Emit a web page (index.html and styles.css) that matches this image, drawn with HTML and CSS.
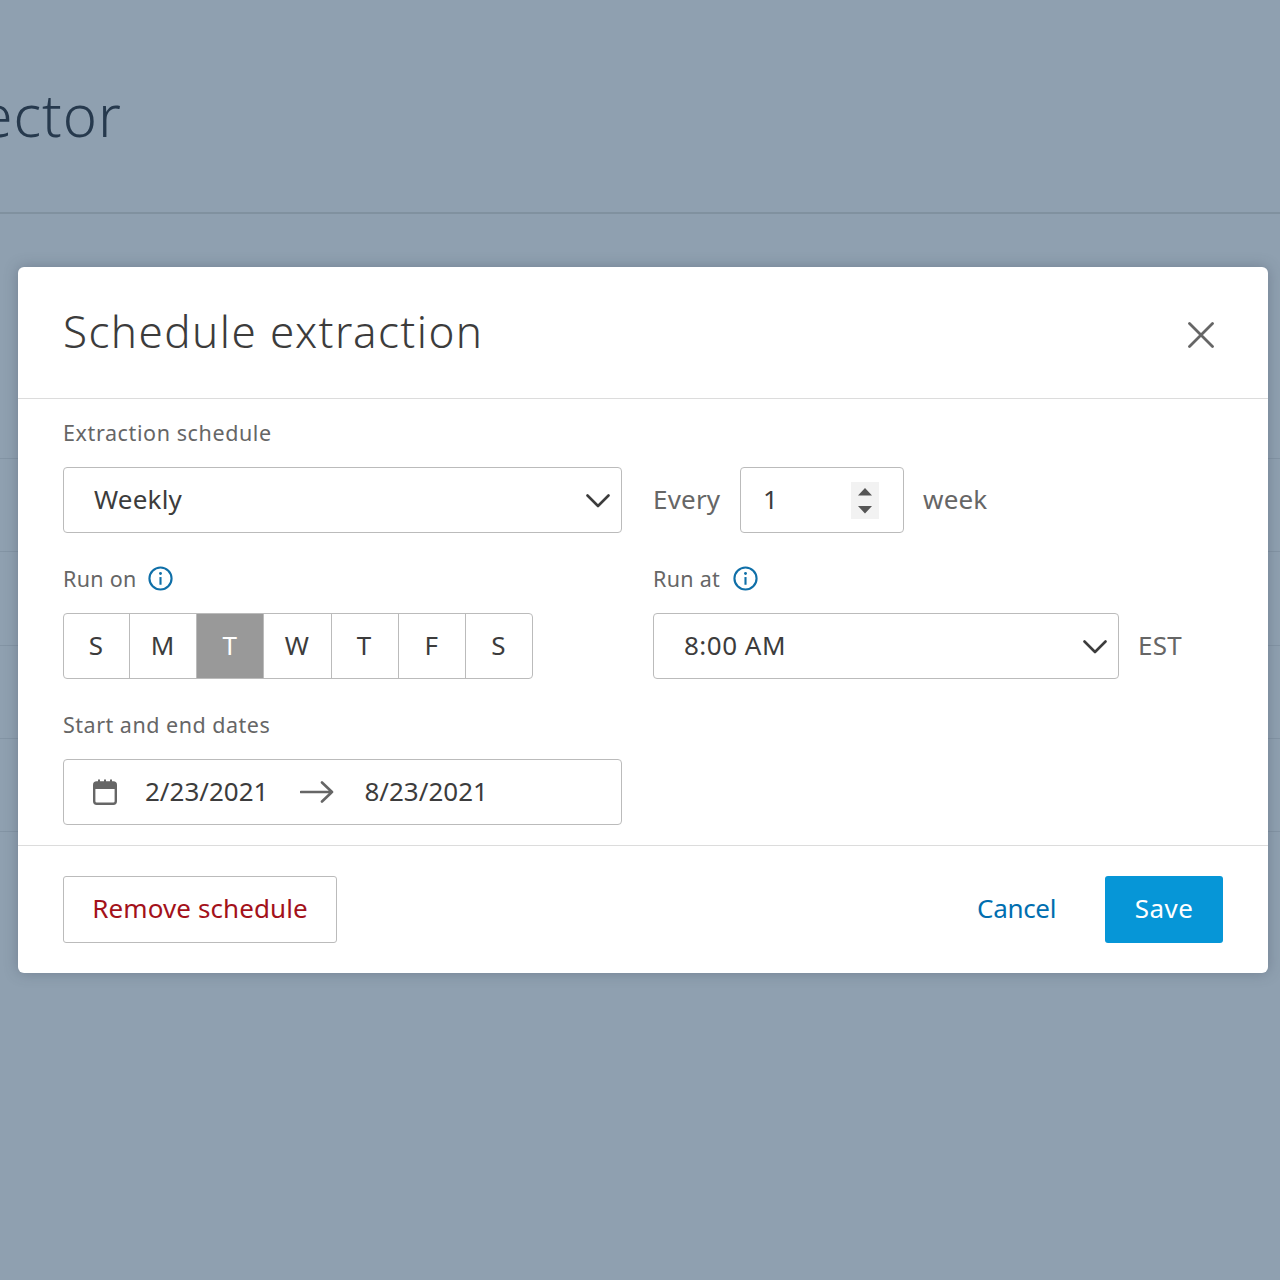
FILE: index.html
```html
<!DOCTYPE html>
<html>
  <head>
    <meta charset="utf-8">
    <title>Schedule extraction</title>
    <link rel="stylesheet" href="styles.css">
  </head>
  <body>
    <div class="page">
      <div class="page-head"><h1 class="page-title">Connector</h1></div>
      <div class="list">
        <div class="list-row"></div>
        <div class="list-row"></div>
        <div class="list-row"></div>
        <div class="list-row"></div>
        <div class="list-row"></div>
      </div>
    </div>

    <div class="modal">
      <div class="modal-head">
        <h2 class="modal-title">Schedule extraction</h2>
        <svg class="close" width="26" height="26" viewBox="0 0 26 26"><path d="M1.500 1.500l23 23M24.500 1.500l-23 23" fill="none" stroke="#666" stroke-width="2.800" stroke-linecap="round"/></svg>
      </div>

      <div class="modal-body">
        <div class="label label-wide">Extraction schedule</div>
        <div class="line">
          <div class="field select select-wide">
            <span class="value-weekly">Weekly</span>
            <svg class="chevron" width="24" height="14" viewBox="0 0 24 14"><path d="M1.500 1.500L12 12 22.500 1.500" fill="none" stroke="#3c3c3c" stroke-width="2.600" stroke-linecap="round" stroke-linejoin="round"/></svg>
          </div>
          <span class="side every">Every</span>
          <div class="field number">
            <span>1</span>
            <div class="stepper">
              <svg width="16" height="30" viewBox="0 0 16 30"><path d="M8 3l7 7.500H1zM1 21h14l-7 7.500z" fill="#555"/></svg>
            </div>
          </div>
          <span class="side week">week</span>
        </div>

        <div class="columns">
          <div class="col-left">
            <div class="label label-short">Run on
              <svg class="info" width="25" height="25" viewBox="0 0 26 26"><circle cx="13" cy="13" r="11.500" fill="none" stroke="#0f6fa8" stroke-width="2.200"/><circle cx="13" cy="7.800" r="1.500" fill="#0f6fa8"/><path d="M13 11.500v8" stroke="#0f6fa8" stroke-width="2.200"/></svg>
            </div>
            <div class="days">
              <div class="day day-first">S</div>
              <div class="day">M</div>
              <div class="day on">T</div>
              <div class="day">W</div>
              <div class="day">T</div>
              <div class="day">F</div>
              <div class="day">S</div>
            </div>
          </div>
          <div class="col-right">
            <div class="label label-short">Run at
              <svg class="info" width="25" height="25" viewBox="0 0 26 26"><circle cx="13" cy="13" r="11.500" fill="none" stroke="#0f6fa8" stroke-width="2.200"/><circle cx="13" cy="7.800" r="1.500" fill="#0f6fa8"/><path d="M13 11.500v8" stroke="#0f6fa8" stroke-width="2.200"/></svg>
            </div>
            <div class="line">
              <div class="field select select-time">
                <span>8:00 AM</span>
                <svg class="chevron" width="24" height="14" viewBox="0 0 24 14"><path d="M1.500 1.500L12 12 22.500 1.500" fill="none" stroke="#3c3c3c" stroke-width="2.600" stroke-linecap="round" stroke-linejoin="round"/></svg>
              </div>
              <span class="side est">EST</span>
            </div>
          </div>
        </div>

        <div class="label">Start and end dates</div>
        <div class="field dates">
          <svg class="cal" width="24" height="26" viewBox="0 0 24 26"><rect x="1.200" y="3.500" width="21.600" height="21.300" rx="2.500" fill="none" stroke="#666" stroke-width="2.400"/><path d="M1.500 3.500h21v6.500h-21z" fill="#666"/><path d="M6 0.500v4M12 0.500v4M18 0.500v4" stroke="#666" stroke-width="2"/></svg>
          <span class="date">2/23/2021</span>
          <svg class="arrow" width="34" height="22" viewBox="0 0 34 22"><path d="M1 11h31M22 1.500L32 11 22 20.500" fill="none" stroke="#666" stroke-width="2.600" stroke-linecap="round" stroke-linejoin="round"/></svg>
          <span class="date">8/23/2021</span>
        </div>
      </div>

      <div class="modal-foot">
        <button class="btn btn-remove">Remove schedule</button>
        <button class="btn btn-cancel">Cancel</button>
        <button class="btn btn-save">Save</button>
      </div>
    </div>
  </body>
</html>
```

FILE: styles.css
```css
html, body {
  margin: 0;
  height: 1280px;
  overflow: hidden;
}
body {
  background: #8fa0b0;
  font-family: "Noto Sans", "Open Sans", sans-serif;
  color: #3c3c3c;
}
.page-head {
  height: 212px;
  border-bottom: 2px solid #80919f;
  overflow: hidden;
}
.page-title {
  margin: 82px 0 0 -163px;
  font-size: 58px;
  line-height: 66px;
  font-weight: 300;
  color: #26394d;
  letter-spacing: 1px;
}
.list {
  padding-top: 244px;
}
.list-row {
  height: 92.300px;
  border-top: 1px solid #8394a4;
}
.modal {
  position: absolute;
  left: 18px;
  top: 267px;
  width: 1250px;
  height: 706px;
  background: #fff;
  border-radius: 6px;
  box-shadow: 0 0 14px rgba(60, 70, 90, 0.35);
}
.modal-head {
  height: 132px;
  box-sizing: border-box;
  padding: 0 54px 0 45px;
  border-bottom: 1px solid #dcdcdc;
  display: flex;
  align-items: center;
  justify-content: space-between;
}
.modal-title {
  margin: 0 0 3px;
  font-size: 44px;
  font-weight: 300;
  letter-spacing: 1.450px;
  color: #3c3c3c;
}
.close {
  margin-top: 4px;
}
.modal-body {
  height: 446px;
  box-sizing: border-box;
  padding: 18px 45px 0;
}
.label {
  display: flex;
  align-items: center;
  gap: 11px;
  height: 30px;
  font-size: 21.500px;
  letter-spacing: 0.500px;
  color: #666;
  margin-bottom: 20px;
}
.label-wide {
  letter-spacing: 0.600px;
}
.label-short {
  letter-spacing: 0.300px;
}
.col-right .label {
  gap: 13px;
}
.line {
  display: flex;
  align-items: center;
}
.field {
  box-sizing: border-box;
  height: 66px;
  padding-bottom: 3px;
  border: 1.500px solid #bbb;
  border-radius: 4px;
  display: flex;
  align-items: center;
  font-size: 26px;
}
.select {
  justify-content: space-between;
  padding-left: 30px;
  padding-right: 11px;
}
.select-wide {
  width: 559px;
}
.select-time {
  width: 466px;
  letter-spacing: 0.500px;
}
.value-weekly {
  letter-spacing: 0.200px;
}
.chevron {
  margin-top: 5px;
}
.side {
  font-size: 26px;
  padding-bottom: 3px;
  letter-spacing: 0.200px;
  color: #666;
}
.every {
  width: 68px;
  margin-left: 31px;
}
.number {
  width: 164px;
  margin-left: 19px;
  padding-left: 22px;
  padding-right: 24px;
  justify-content: space-between;
}
.stepper {
  width: 28px;
  height: 37px;
  margin-top: 3px;
  background: #f2f2f2;
  display: flex;
  align-items: center;
  justify-content: center;
}
.week {
  margin-left: 19px;
}
.est {
  margin-left: 19px;
}
.columns {
  display: flex;
  margin-top: 30px;
  margin-bottom: 30px;
}
.col-left {
  width: 590px;
}
.days {
  display: flex;
  width: 470px;
  height: 66px;
  box-sizing: border-box;
  border: 1.500px solid #bbb;
  border-radius: 4px;
}
.day {
  flex: 1;
  box-sizing: border-box;
  padding: 0 1px 3px 0;
  display: flex;
  align-items: center;
  justify-content: center;
  font-size: 26px;
  border-left: 1.500px solid #bbb;
}
.day-first {
  flex: 0 0 65px;
  border-left: 0;
}
.day.on {
  background: #999;
  color: #fff;
}
.dates {
  width: 559px;
  padding-left: 29px;
}
.cal {
  margin-top: 3px;
}
.date {
  margin-left: 28px;
}
.arrow {
  margin-top: 3px;
  margin-left: 32px;
  margin-right: 2px;
}
.modal-foot {
  height: 128px;
  box-sizing: border-box;
  border-top: 1px solid #dcdcdc;
  padding: 30px 45px 0;
  display: flex;
  align-items: flex-start;
}
.btn {
  height: 67px;
  box-sizing: border-box;
  font-family: inherit;
  font-size: 26px;
  border-radius: 3px;
  background: #fff;
  border: 0;
  padding: 0 0 3px;
}
.btn-remove {
  width: 274px;
  border: 1.500px solid #bbb;
  letter-spacing: 0.100px;
  color: #a3111a;
}
.btn-cancel {
  margin-left: auto;
  width: 80px;
  padding-right: 2px;
  letter-spacing: -0.300px;
  color: #006eaf;
}
.btn-save {
  margin-left: 48px;
  width: 118px;
  background: #0696d7;
  letter-spacing: 0.500px;
  color: #fff;
}
```
